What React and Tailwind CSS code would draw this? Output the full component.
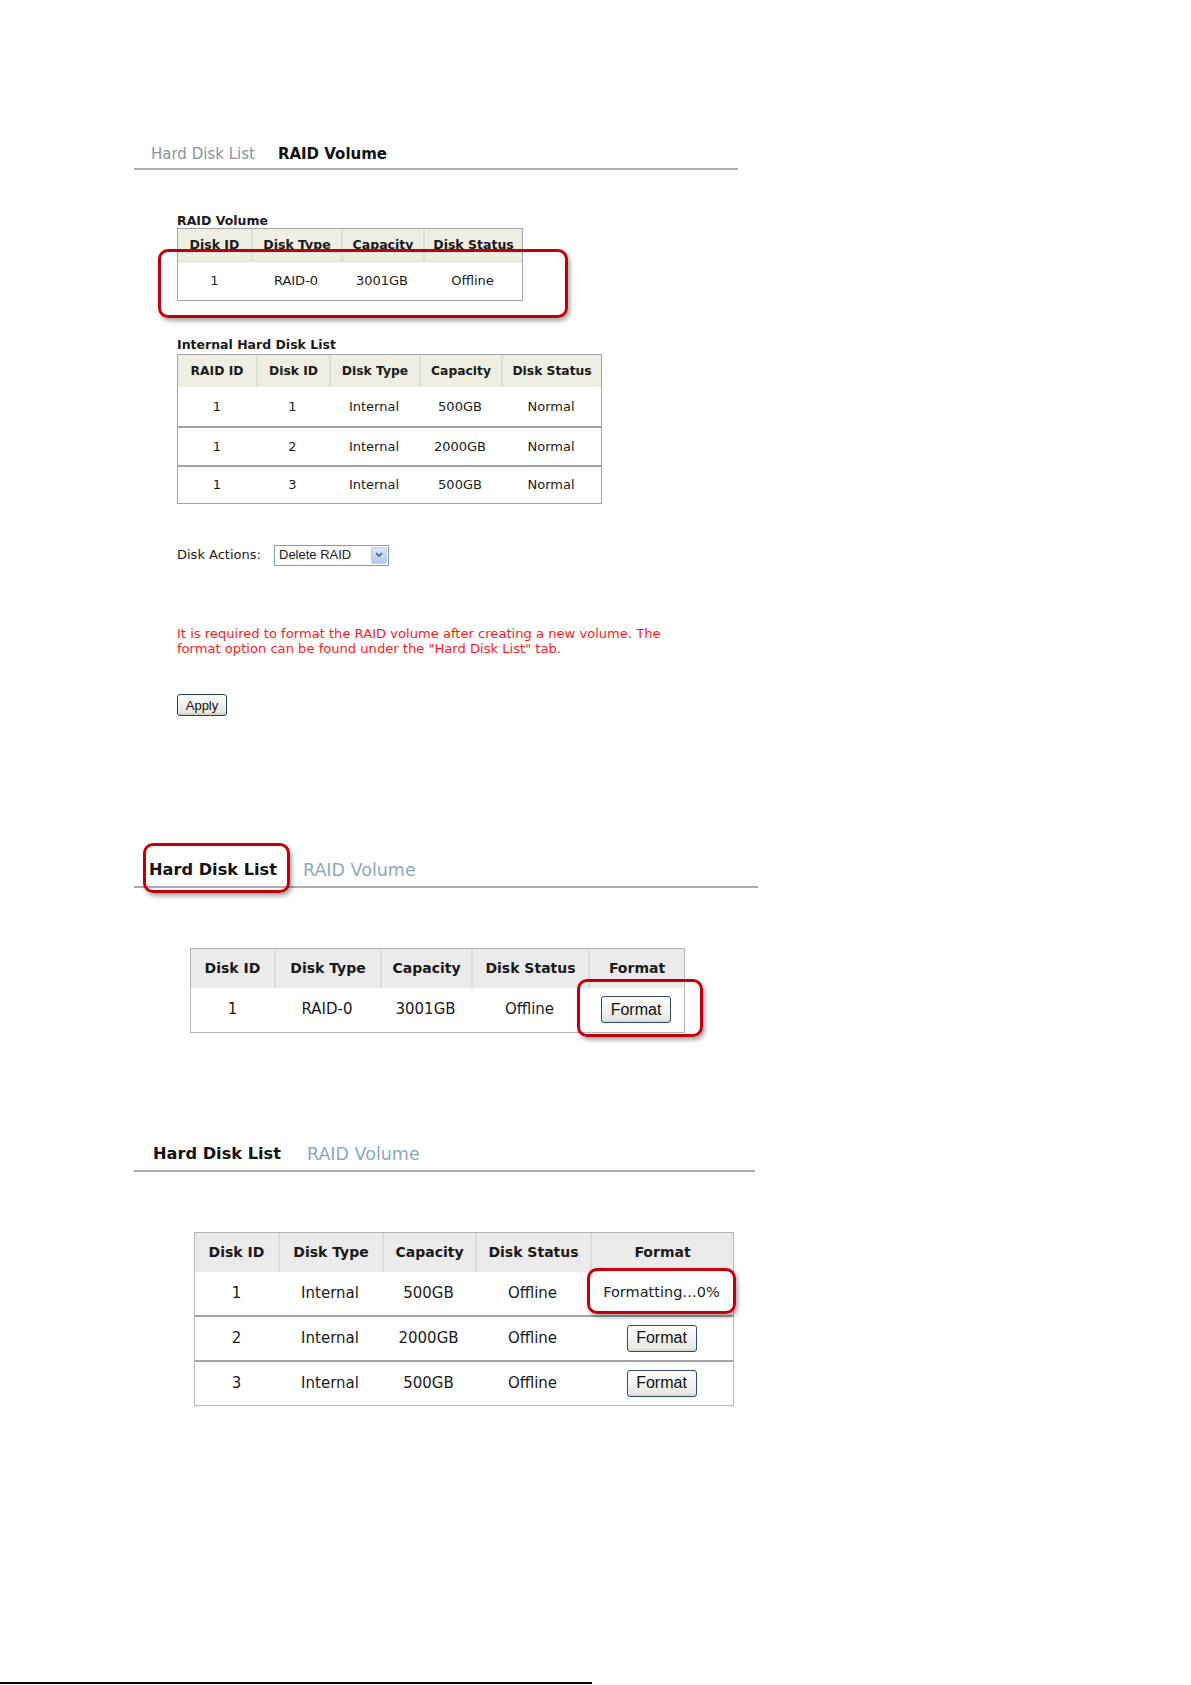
import React from 'react';

// Annotated screenshots: RAID volume / hard disk list pages

const Callout = ({ className }) => (
  <div
    className={
      'absolute border-[3px] border-[#c2000b] rounded-[10px] shadow-[2px_3px_4px_rgba(0,0,0,0.35)] pointer-events-none ' +
      className
    }
  />
);

const FormatButton = () => (
  <button className="h-[27px] w-[70px] rounded-[3px] border border-[#2a4a78] bg-gradient-to-b from-white to-[#e6e6df] text-[16px] text-[#111] font-['Liberation_Sans',Arial,sans-serif] leading-none shadow-[inset_0_-2px_0_rgba(0,0,0,0.06)]">
    Format
  </button>
);

const internalRows = [
  ['1', '1', 'Internal', '500GB', 'Normal'],
  ['1', '2', 'Internal', '2000GB', 'Normal'],
  ['1', '3', 'Internal', '500GB', 'Normal'],
];

const rowClass = [
  'grid grid-cols-[78px_73px_90px_82px_100px] h-[39px] text-[13px]',
  'grid grid-cols-[78px_73px_90px_82px_100px] h-[39px] text-[13px] border-t-2 border-[#a3a3a3]',
  'grid grid-cols-[78px_73px_90px_82px_100px] h-[38px] text-[13px] border-t-2 border-[#a3a3a3]',
];

export default function App() {
  return (
    <div className="relative min-h-[1685px] bg-white text-[#1a1a1a] font-['DejaVu_Sans',Verdana,sans-serif]">
      <div className="pl-[134px] pt-[145px]">
        {/* ---------- Section 1 : RAID Volume tab ---------- */}
        <div className="w-[604px] h-[25px] flex items-start gap-[23px] pl-[17px] border-b-2 border-[#a8afb5]">
          <span className="text-[15px] leading-[18px] text-[#8b9399]">Hard Disk List</span>
          <span className="text-[15px] leading-[18px] font-bold text-[#111]">RAID Volume</span>
        </div>

        <div className="ml-[43px]">
          <div className="mt-[43px] text-[12.5px] leading-[15px] font-bold">RAID Volume</div>

          <div className="relative w-[346px]">
            <div className="border border-[#a4a4a4]">
              <div className="grid grid-cols-[73px_90px_82px_99px] h-[33px] bg-[#eeeee3] text-[12.5px] font-bold border-b border-[#dddcd0]">
                <div className="flex items-center justify-center">Disk ID</div>
                <div className="flex items-center justify-center border-l-2 border-[#e0dfd3]">Disk Type</div>
                <div className="flex items-center justify-center border-l-2 border-[#e0dfd3]">Capacity</div>
                <div className="flex items-center justify-center border-l-2 border-[#e0dfd3]">Disk Status</div>
              </div>
              <div className="grid grid-cols-[73px_90px_82px_99px] h-[38px] text-[13px]">
                <div className="flex items-center justify-center">1</div>
                <div className="flex items-center justify-center">RAID-0</div>
                <div className="flex items-center justify-center">3001GB</div>
                <div className="flex items-center justify-center">Offline</div>
              </div>
            </div>
            <Callout className="left-[-19px] top-[21px] w-[410px] h-[69px]" />
          </div>

          <div className="mt-[36px] text-[12.5px] leading-[15px] font-bold">Internal Hard Disk List</div>
          <div className="w-[425px] border border-[#a4a4a4] mt-[2px]">
            <div className="grid grid-cols-[78px_73px_90px_82px_100px] h-[32px] bg-[#eeeee3] text-[12.3px] font-bold">
              <div className="flex items-center justify-center">RAID ID</div>
              <div className="flex items-center justify-center border-l-2 border-[#e0dfd3]">Disk ID</div>
              <div className="flex items-center justify-center border-l-2 border-[#e0dfd3]">Disk Type</div>
              <div className="flex items-center justify-center border-l-2 border-[#e0dfd3]">Capacity</div>
              <div className="flex items-center justify-center border-l-2 border-[#e0dfd3]">Disk Status</div>
            </div>
            {internalRows.map((r, i) => (
              <div key={i} className={rowClass[i]}>
                {r.map((c, j) => (
                  <div key={j} className="flex items-center justify-center">{c}</div>
                ))}
              </div>
            ))}
          </div>

          <div className="mt-[40px] flex items-center h-[22px]">
            <span className="text-[13px] w-[97px]">Disk Actions:</span>
            <div className="flex items-center h-[21px] w-[115px] border border-[#7f9db9] bg-white pl-[4px] pr-[1px]">
              <span className="flex-1 text-[13px] font-['Liberation_Sans',Arial,sans-serif]">Delete RAID</span>
              <div className="w-[16px] h-[17px] rounded-[2px] bg-gradient-to-b from-[#dbe6fd] to-[#b3c8f5] border border-[#bccdf3] flex items-center justify-center">
                <svg width="8" height="6" viewBox="0 0 8 6">
                  <path d="M1 1 L4 4 L7 1" fill="none" stroke="#4d6185" strokeWidth="1.6" />
                </svg>
              </div>
            </div>
          </div>

          <p className="mt-[60px] text-[13.1px] leading-[15px] text-[#ff1a1a]">
            It is required to format the RAID volume after creating a new volume. The
            <br />
            format option can be found under the "Hard Disk List" tab.
          </p>

          <button className="mt-[38px] h-[22px] w-[50px] rounded-[3px] border border-[#1d3f72] bg-gradient-to-b from-white to-[#e4e3dc] text-[13px] font-['Liberation_Sans',Arial,sans-serif] leading-none text-[#111] shadow-[inset_0_-2px_0_rgba(0,0,0,0.08)]">
            Apply
          </button>
        </div>

        {/* ---------- Section 2 : Hard Disk List tab ---------- */}
        <div className="relative mt-[133px] w-[624px] h-[38px] flex items-end gap-[26px] pl-[15px] pb-[6px] border-b-2 border-[#a8acb0]">
          <span className="text-[16.2px] leading-[20px] font-bold text-[#111]">Hard Disk List</span>
          <span className="text-[17.5px] leading-[20px] text-[#8ea8bb]">RAID Volume</span>
          <Callout className="left-[9px] top-[-7px] w-[147px] h-[50px]" />
        </div>

        <div className="relative ml-[56px] mt-[60px] w-[495px]">
          <div className="border border-[#b4b4b4]">
            <div className="grid grid-cols-[83px_106px_91px_117px_96px] h-[39px] bg-[#ebebeb] text-[14px] font-bold">
              <div className="flex items-center justify-center">Disk ID</div>
              <div className="flex items-center justify-center border-l-2 border-[#dcdcdc]">Disk Type</div>
              <div className="flex items-center justify-center border-l-2 border-[#dcdcdc]">Capacity</div>
              <div className="flex items-center justify-center border-l-2 border-[#dcdcdc]">Disk Status</div>
              <div className="flex items-center justify-center border-l-2 border-[#dcdcdc]">Format</div>
            </div>
            <div className="grid grid-cols-[83px_106px_91px_117px_96px] h-[44px] text-[15px]">
              <div className="flex items-center justify-center">1</div>
              <div className="flex items-center justify-center">RAID-0</div>
              <div className="flex items-center justify-center">3001GB</div>
              <div className="flex items-center justify-center">Offline</div>
              <div className="flex items-center justify-center">
                <FormatButton />
              </div>
            </div>
          </div>
          <Callout className="left-[387px] top-[31px] w-[126px] h-[58px]" />
        </div>

        {/* ---------- Section 3 : formatting progress ---------- */}
        <div className="mt-[101px] w-[621px] h-[38px] flex items-end gap-[26px] pl-[19px] pb-[6px] border-b-2 border-[#a8acb0]">
          <span className="text-[16.2px] leading-[20px] font-bold text-[#111]">Hard Disk List</span>
          <span className="text-[17.5px] leading-[20px] text-[#8ea8bb]">RAID Volume</span>
        </div>

        <div className="relative ml-[60px] mt-[60px] w-[540px]">
          <div className="border border-[#b4b4b4]">
            <div className="grid grid-cols-[83px_104px_93px_115px_143px] h-[39px] bg-[#ebebeb] text-[14px] font-bold">
              <div className="flex items-center justify-center">Disk ID</div>
              <div className="flex items-center justify-center border-l-2 border-[#dcdcdc]">Disk Type</div>
              <div className="flex items-center justify-center border-l-2 border-[#dcdcdc]">Capacity</div>
              <div className="flex items-center justify-center border-l-2 border-[#dcdcdc]">Disk Status</div>
              <div className="flex items-center justify-center border-l-2 border-[#dcdcdc]">Format</div>
            </div>
            {[
              ['1', '500GB', null],
              ['2', '2000GB', 'btn'],
              ['3', '500GB', 'btn'],
            ].map(([id, cap, fmt], i) => (
              <div
                key={id}
                className={
                  i === 0
                    ? 'grid grid-cols-[83px_104px_93px_115px_143px] h-[43px] text-[15px]'
                    : 'grid grid-cols-[83px_104px_93px_115px_143px] h-[45px] text-[15px] border-t-2 border-[#a3a3a3]'
                }
              >
                <div className="flex items-center justify-center">{id}</div>
                <div className="flex items-center justify-center">Internal</div>
                <div className="flex items-center justify-center">{cap}</div>
                <div className="flex items-center justify-center">Offline</div>
                <div className="flex items-center justify-center">
                  {fmt ? <FormatButton /> : <span className="text-[14.5px]">Formatting…0%</span>}
                </div>
              </div>
            ))}
          </div>
          <Callout className="left-[393px] top-[36px] w-[149px] h-[46px]" />
        </div>
      </div>

      <div className="absolute left-0 top-[1682px] w-[592px] h-[2px] bg-black" />
    </div>
  );
}
